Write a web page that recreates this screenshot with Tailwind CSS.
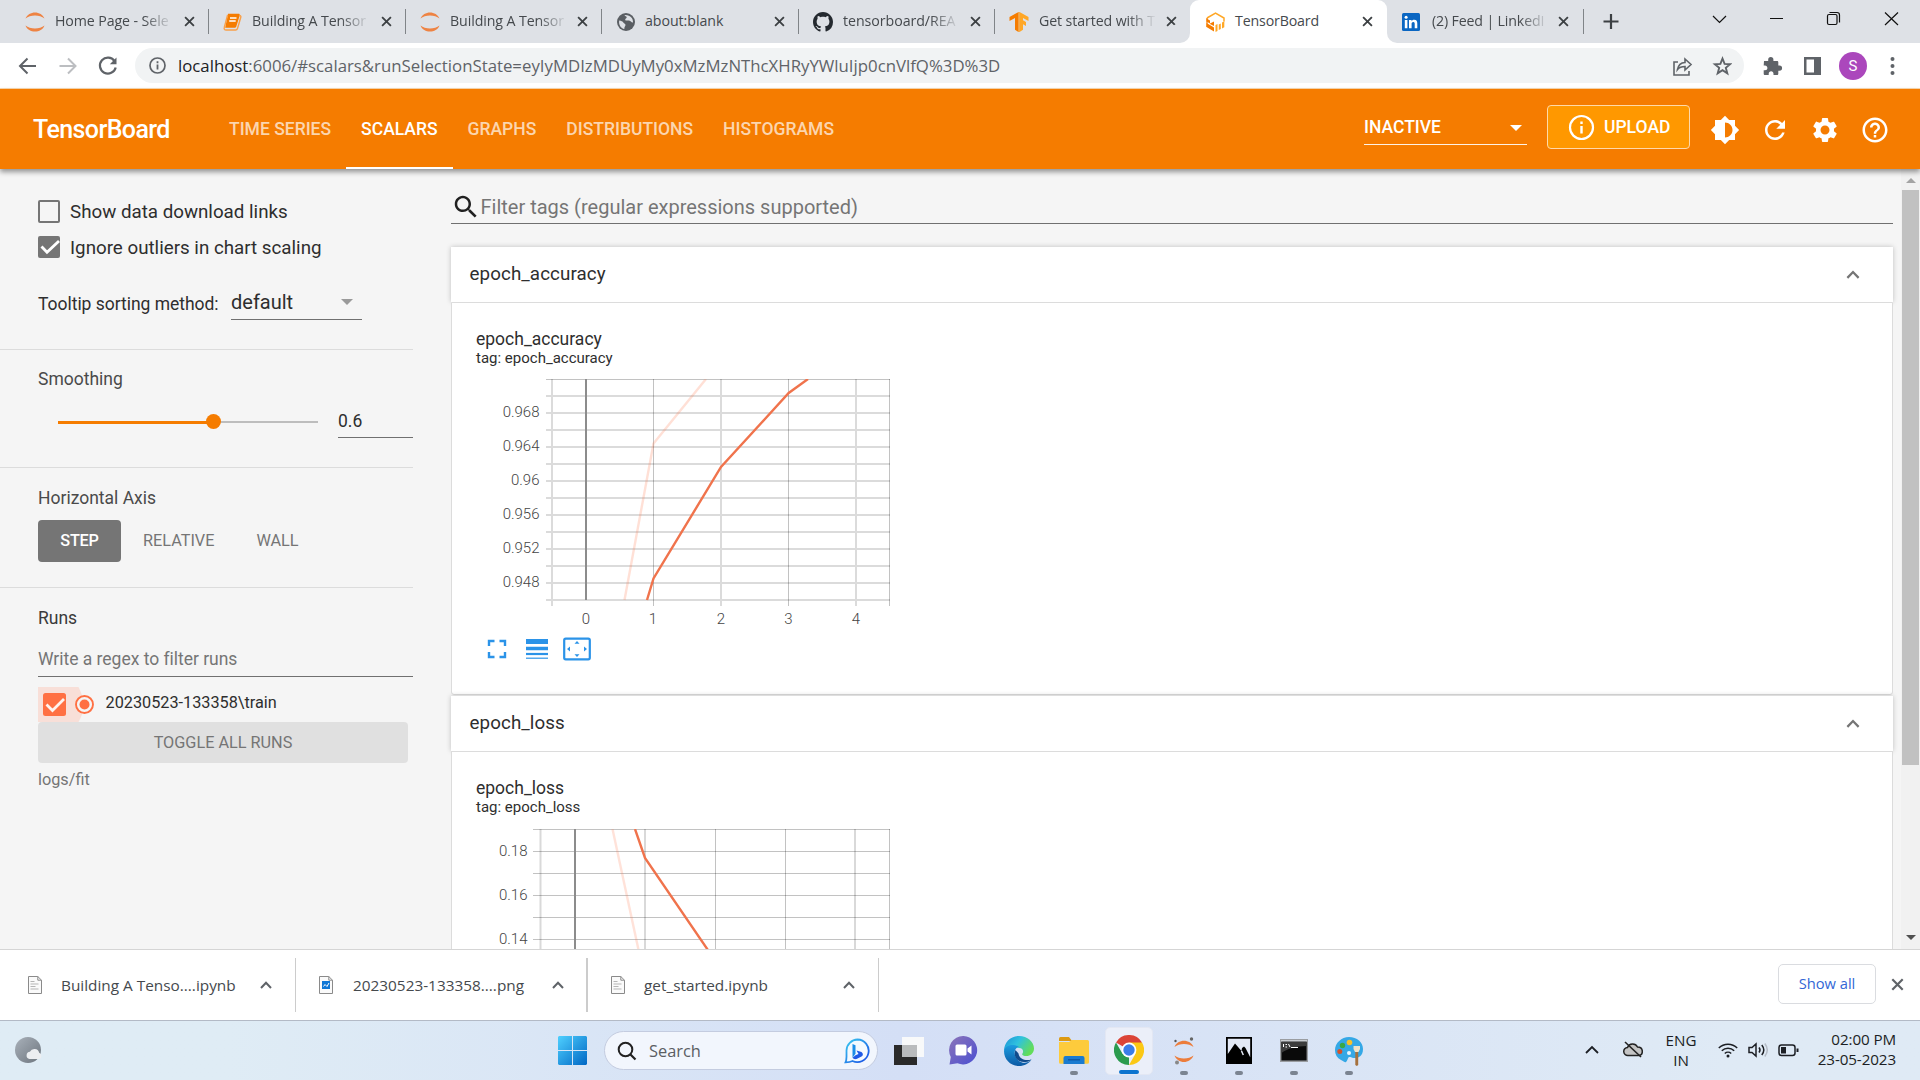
<!DOCTYPE html>
<html lang="en">
<head>
<meta charset="utf-8">
<title>TensorBoard</title>
<script src="https://cdn.jsdelivr.net/npm/@tailwindcss/browser@4"></script>
</head>
<body class="w-[1920px] h-[1080px] overflow-hidden flex flex-col bg-white font-['Roboto',sans-serif] text-[17.5px] text-[#2e2e2e]">

<svg class="hidden">
  <defs>
    <symbol id="x" viewBox="0 0 12 12"><path d="M1.2 1.2 10.8 10.8M10.8 1.2 1.2 10.8" fill="none" stroke="currentColor" stroke-width="2"/></symbol>
    <symbol id="jup" viewBox="0 0 20 20"><path d="M.5 6.5C2 2.500 6 .4 10 .4s8 2.100 9.500 6.100C17 4.500 13.800 3.500 10 3.500S3 4.500.5 6.500zM.5 13.500C2 17.500 6 19.600 10 19.600s8-2.100 9.500-6.100c-2.500 2-5.700 3-9.500 3s-7-1-9.500-3z" fill="#ee8343"/></symbol>
    <symbol id="up" viewBox="0 0 12 8"><path d="M1 7 6 1.800 11 7" fill="none" stroke="currentColor" stroke-width="2"/></symbol>
    <symbol id="doc" viewBox="0 0 14 18"><path d="M.5.5h9.300l3.700 3.700v13.300H.5z" fill="#fafafa" stroke="#8a8a8a"/><path d="M9.800.5v3.700h3.700" fill="none" stroke="#8a8a8a"/></symbol>
  </defs>
</svg>

<!-- Tab strip -->
<div class="h-[43px] shrink-0 bg-[#dee1e6] flex items-stretch pl-[12px] font-['Open_Sans',sans-serif] text-[14.2px] text-[#45494d]">
  <div class="w-[197px] flex items-center pl-[13px] pr-[14px] relative">
    <svg class="w-[20px] h-[20px] shrink-0"><use href="#jup"/></svg>
    <span class="ml-[10px] w-[118px] pb-px whitespace-nowrap mask-r-from-75% tracking-[-0.1px]">Home Page - Sele</span>
    <svg class="w-[11px] h-[11px] ml-auto text-[#3c4043]"><use href="#x"/></svg>
    <i class="absolute right-0 top-[9px] w-px h-[25px] bg-[#808488]"></i>
  </div>
  <div class="w-[197px] flex items-center pl-[14px] pr-[14px] relative">
    <svg class="w-[19px] h-[18px] shrink-0" viewBox="0 0 19 18"><path d="M5 .8h10.500c1 0 1.500.6 1.200 1.600l-3.400 11c-.3.8-1 1.300-1.800 1.300H2.200z" fill="#f57c00"/><path d="M16.500 2.500c1.200.1 1.600.9 1.300 1.800l-3.300 11.200c-.3 1-1 1.500-1.900 1.500H3.200C1.500 17 .8 16 1.300 14.500L4.600 2" fill="none" stroke="#f9a04a" stroke-width="1.400"/><path d="M7 5h6.500M6.200 8h6.500" stroke="#fff" stroke-width="1.400"/></svg>
    <span class="ml-[10px] w-[118px] pb-px whitespace-nowrap mask-r-from-75% tracking-[-0.1px]">Building A Tensor</span>
    <svg class="w-[11px] h-[11px] ml-auto text-[#3c4043]"><use href="#x"/></svg>
    <i class="absolute right-0 top-[9px] w-px h-[25px] bg-[#808488]"></i>
  </div>
  <div class="w-[196px] flex items-center pl-[14px] pr-[14px] relative">
    <svg class="w-[20px] h-[20px] shrink-0"><use href="#jup"/></svg>
    <span class="ml-[10px] w-[118px] pb-px whitespace-nowrap mask-r-from-75% tracking-[-0.1px]">Building A Tensor</span>
    <svg class="w-[11px] h-[11px] ml-auto text-[#3c4043]"><use href="#x"/></svg>
    <i class="absolute right-0 top-[9px] w-px h-[25px] bg-[#808488]"></i>
  </div>
  <div class="w-[197px] flex items-center pl-[15px] pr-[14px] relative">
    <svg class="w-[18px] h-[18px] shrink-0" viewBox="0 0 18 18"><circle cx="9" cy="9" r="9" fill="#5a5e63"/><path d="M2.200 7.500c2 .2 3.500.8 4.300 2.200.6 1 2 .8 2 2.300 0 1.300-1.200 1.600-1.200 4C4 15.500 1.500 12 2.200 7.500zM7.500 2c.4 1.300 2 1 2.200 2.200.2 1.100-1.800 1.100-1.500 2.500.3 1.300 2.200.6 3.800.8 1.800.2 2.300 2.300 4 2 .3-3.800-2.300-7.800-8.500-7.500z" fill="#dee1e6"/></svg>
    <span class="ml-[10px] w-[118px] pb-px whitespace-nowrap tracking-[-0.05px]">about:blank</span>
    <svg class="w-[11px] h-[11px] ml-auto text-[#3c4043]"><use href="#x"/></svg>
    <i class="absolute right-0 top-[9px] w-px h-[25px] bg-[#808488]"></i>
  </div>
  <div class="w-[196px] flex items-center pl-[14px] pr-[14px] relative">
    <svg class="w-[20px] h-[20px] shrink-0" viewBox="0 0 16 16"><path fill="#24292f" d="M8 0C3.580 0 0 3.580 0 8c0 3.540 2.290 6.530 5.470 7.590.4.070.55-.17.55-.38 0-.19-.01-.82-.01-1.490-2.010.37-2.530-.49-2.690-.94-.09-.23-.48-.94-.82-1.130-.28-.15-.68-.52-.01-.53.63-.01 1.080.58 1.230.82.72 1.210 1.870.87 2.330.66.07-.52.28-.87.51-1.070-1.780-.2-3.640-.89-3.640-3.950 0-.87.31-1.590.82-2.150-.08-.2-.36-1.020.08-2.120 0 0 .67-.21 2.200.82.64-.18 1.320-.27 2-.27s1.360.09 2 .27c1.530-1.040 2.200-.82 2.200-.82.44 1.100.16 1.920.08 2.120.51.56.82 1.270.82 2.150 0 3.070-1.870 3.750-3.650 3.950.29.25.54.73.54 1.480 0 1.070-.01 1.930-.01 2.200 0 .21.15.46.55.38A8.010 8.010 0 0 0 16 8c0-4.420-3.580-8-8-8z"/></svg>
    <span class="ml-[10px] w-[117px] pb-px whitespace-nowrap mask-r-from-75% tracking-[-0.05px]">tensorboard/REA</span>
    <svg class="w-[11px] h-[11px] ml-auto text-[#3c4043]"><use href="#x"/></svg>
    <i class="absolute right-0 top-[9px] w-px h-[25px] bg-[#808488]"></i>
  </div>
  <div class="w-[195px] flex items-center pl-[14px] pr-[13px]">
    <svg class="w-[20px] h-[20px] shrink-0" viewBox="0 0 20 20"><path d="M9.500 0v20L6 17.800V6L.5 9V5z" fill="#f57c00"/><path d="M10.500 0v20l3.500-2.200v-5.500l3 1.700V10l-3-1.800V6l5.500 3V5z" fill="#ffa726"/><path d="M9.500 0h1v20h-1z" fill="#fb9210"/></svg>
    <span class="ml-[10px] w-[118px] pb-px whitespace-nowrap mask-r-from-75% tracking-[-0.1px]">Get started with T</span>
    <svg class="w-[11px] h-[11px] ml-auto text-[#3c4043]"><use href="#x"/></svg>
  </div>
  <div class="bg-white w-[197px]"><div class="w-[197px] h-full flex items-center pl-[16px] pr-[14px] relative">
    <i class="absolute top-0 left-0 w-[9px] h-[9px] bg-[#dee1e6]"></i><i class="absolute top-0 left-0 w-[18px] h-[18px] rounded-full bg-white"></i>
    <i class="absolute top-0 right-0 w-[9px] h-[9px] bg-[#dee1e6]"></i><i class="absolute top-0 right-0 w-[18px] h-[18px] rounded-full bg-white"></i>
    <i class="absolute bottom-0 left-[-10px] w-[10px] h-[10px] bg-white"></i><i class="absolute bottom-0 left-[-20px] w-[20px] h-[20px] rounded-full bg-[#dee1e6]"></i>
    <i class="absolute bottom-0 right-[-10px] w-[10px] h-[10px] bg-white"></i><i class="absolute bottom-0 right-[-20px] w-[20px] h-[20px] rounded-full bg-[#dee1e6]"></i>
    <svg class="w-[19px] h-[20px] shrink-0 relative" viewBox="0 0 19 20"><path d="M1 6 9.500 1 18 6v3.500" fill="none" stroke="#ffa726" stroke-width="1.500"/><path d="M.5 6.500 4 8.500v3l4-2v4.500l-4-2v-.5L.5 9.500zM.5 11l7.500 4.500V19.500L.5 15z" fill="#f57c00"/><path d="M9.500 13l2-1v7l-2 1zM12.800 12.500l2-1V17l-2 1zM16 10.500l2.300-1.300v6l-2.300 1.300z" fill="#ffa726"/><path d="M1 6v9" stroke="#f57c00" stroke-width="1.200"/></svg>
    <span class="ml-[10px] w-[118px] pb-px whitespace-nowrap tracking-[-0.15px]">TensorBoard</span>
    <svg class="w-[11px] h-[11px] ml-auto text-[#3c4043]"><use href="#x"/></svg>
  </div></div>
  <div class="w-[197px] flex items-center pl-[15px] pr-[15px] relative">
    <svg class="w-[18px] h-[18px] shrink-0 relative" viewBox="0 0 18 18"><rect width="18" height="18" rx="1.500" fill="#0a66c2"/><path d="M2.800 7h2.600v8.300H2.800zM7 7h2.500v1.200C10 7.400 11 6.800 12.200 6.800c2.500 0 3.100 1.600 3.100 3.900v4.600h-2.600v-4.200c0-1.100-.1-2.100-1.400-2.100-1.400 0-1.700 1-1.700 2.100v4.200H7z" fill="#fff"/><circle cx="4.100" cy="4.200" r="1.500" fill="#fff"/></svg>
    <span class="ml-[12px] w-[117px] pb-px whitespace-nowrap mask-r-from-75% tracking-[-0.15px]">(2) Feed | LinkedI</span>
    <svg class="w-[11px] h-[11px] ml-auto text-[#3c4043]"><use href="#x"/></svg>
    <i class="absolute right-0 top-[9px] w-px h-[25px] bg-[#808488]"></i>
  </div>
  <div class="flex-1 flex items-center relative text-black">
    <svg class="w-[336px] h-[43px]" viewBox="0 0 336 43" fill="none" stroke="#111" stroke-width="1.200"><path d="M27 14v15M19.500 21.500h15" stroke="#3c4043" stroke-width="2.200"/><path d="M129 16l6.500 6.500L142 16M186 18.500h13M301 12.500l13 12.500M314 12.500l-13 12.500"/><rect x="243.500" y="14.500" width="9.500" height="10" rx="1.500"/><path d="M245.500 12.500h7.500q2.500 0 2.500 2.500v7.500"/></svg>
  </div>
</div>

<!-- Address bar -->
<div class="h-[46px] shrink-0 bg-white flex items-center border-b border-[#fbd9b0] relative">
  <svg class="w-[135px] h-[44px] shrink-0" viewBox="0 0 135 44" fill="none" stroke="#5f6368" stroke-width="2"><path d="M36 22H20.500M27.500 14.500 20 22l7.500 7.500"/><path d="M59.500 22H75M68 14.500l7.500 7.500L68 29.500" stroke="#bcbec1"/><path d="M114.500 17a8 8 0 1 0 1.200 6.500" stroke-width="2.200"/><path d="M116.500 13.500v6.700h-6.700z" fill="#5f6368" stroke="none"/></svg>
  <div class="w-[1609px] h-[35px] rounded-full bg-[#f1f3f4] flex items-center pl-[14px] pr-[12px]">
    <svg class="w-[17px] h-[17px] shrink-0" viewBox="0 0 17 17"><circle cx="8.500" cy="8.500" r="7.500" fill="none" stroke="#5f6368" stroke-width="1.700"/><path d="M8.500 7.500v5M8.500 4.300v1.900" stroke="#5f6368" stroke-width="1.800"/></svg>
    <span class="ml-[12px] font-['Open_Sans',sans-serif] text-[16.8px] whitespace-nowrap text-[#5f6368]"><span class="text-[#202124]">localhost</span>:6006/#scalars&amp;runSelectionState=eyIyMDIzMDUyMy0xMzMzNThcXHRyYWluIjp0cnVlfQ%3D%3D</span>
    <svg class="w-[60px] h-[24px] ml-auto shrink-0" viewBox="0 0 60 24" fill="none" stroke="#5f6368" stroke-width="1.600"><path d="M6 8H2v13h15v-4M5.500 15.500c.8-4.500 3.500-6.800 7.500-7V5l6 5.500-6 5.500v-3.500c-3.500 0-5.700.8-7.500 3z"/><path d="M50.500 4.500l2.100 5.400 5.500.3-4.300 3.600 1.500 5.500-4.800-3.100-4.800 3.100 1.500-5.500-4.300-3.600 5.500-.3z" stroke-width="1.900"/></svg>
  </div>
  <svg class="w-[176px] h-[44px] shrink-0" viewBox="0 0 176 44" fill="#5f6368"><path d="M20 17h4.200v-1.500a2.600 2.600 0 0 1 5.200 0V17h3.600c.8 0 1.300.5 1.300 1.300v3.200h1.200a2.600 2.600 0 0 1 0 5.200h-1.200v3c0 .8-.5 1.300-1.300 1.300h-3.500v-1.300c0-1.500-1-2.500-2.400-2.500s-2.400 1-2.400 2.500V31H21c-.8 0-1.300-.5-1.300-1.300v-3.500H21c1.500 0 2.400-1 2.400-2.300s-1-2.400-2.400-2.400h-1.300z"/><path fill-rule="evenodd" d="M60 13h17v18H60zm2.500 2.500v13h7.500v-13z"/><circle cx="109" cy="22" r="14" fill="#ab47bc"/><circle cx="148.500" cy="15" r="2"/><circle cx="148.500" cy="22" r="2"/><circle cx="148.500" cy="29" r="2"/><text x="109" y="27" font-family="Roboto" font-size="15" fill="#fff" text-anchor="middle">S</text></svg>
</div>

<!-- TensorBoard header -->
<div class="h-[80px] shrink-0 bg-[#f57c00] flex items-center relative z-10 shadow-[0_3px_5px_rgba(0,0,0,0.4)] text-white font-medium">
  <div class="w-[182px] pl-[33px] pt-[2px] text-[25px] tracking-[-0.6px]">TensorBoard</div>
  <nav class="flex h-full ml-[32px] text-white/70 [&>span]:px-[15px] [&>span]:flex [&>span]:items-center whitespace-nowrap">
    <span class="pt-px">TIME SERIES</span>
    <span class="text-white border-b-2 border-white pt-[3px]">SCALARS</span>
    <span class="pt-px">GRAPHS</span>
    <span class="pt-px">DISTRIBUTIONS</span>
    <span class="pt-px">HISTOGRAMS</span>
  </nav>
  <div class="ml-auto flex items-center h-full">
    <div class="w-[163px] h-[32px] border-b border-white/90 flex items-center mr-[20px]"><span class="relative top-[-1px]">INACTIVE</span><svg class="w-[12px] h-[6px] ml-auto mr-[5px] relative top-[-1px]" viewBox="0 0 12 6"><path d="M0 0h12L6 6z" fill="#fff"/></svg></div>
    <div class="w-[143px] h-[44px] relative top-[-2px] rounded-[4px] border border-[#ffd9a8] bg-[#ff9800] flex items-center pl-[20px]">
      <svg class="w-[27px] h-[27px]" viewBox="0 0 27 27"><circle cx="13.500" cy="13.500" r="11.500" fill="none" stroke="#fff" stroke-width="2.200"/><path d="M13.500 12v7.500M13.500 7.500v2.600" stroke="#fff" stroke-width="2.400"/></svg>
      <span class="ml-[9px] pt-px">UPLOAD</span>
    </div>
    <div class="flex items-center ml-[20px] mr-[30px] gap-[20px] fill-white pt-px">
      <svg class="w-[30px] h-[30px]" viewBox="0 0 24 24"><path d="M20 15.310 23.310 12 20 8.690V4h-4.690L12 .69 8.690 4H4v4.690L.69 12 4 15.310V20h4.690L12 23.310 15.310 20H20v-4.690zM12 18V6c3.310 0 6 2.690 6 6s-2.690 6-6 6z"/></svg>
      <svg class="w-[30px] h-[30px]" viewBox="0 0 24 24"><path d="M17.650 6.350C16.200 4.900 14.210 4 12 4c-4.420 0-7.990 3.580-7.990 8s3.570 8 7.990 8c3.730 0 6.840-2.550 7.730-6h-2.080c-.82 2.330-3.040 4-5.650 4-3.310 0-6-2.690-6-6s2.690-6 6-6c1.660 0 3.140.69 4.220 1.780L13 11h7V4l-2.350 2.350z"/></svg>
      <svg class="w-[30px] h-[30px]" viewBox="0 0 24 24"><path d="M19.140 12.940c.04-.3.060-.61.060-.94 0-.32-.02-.64-.07-.94l2.030-1.580c.18-.14.23-.41.12-.61l-1.920-3.320c-.12-.22-.37-.29-.59-.22l-2.390.96c-.5-.38-1.030-.7-1.620-.94l-.36-2.540c-.04-.24-.24-.41-.48-.41h-3.840c-.24 0-.43.17-.47.41l-.36 2.540c-.59.24-1.130.57-1.620.94l-2.390-.96c-.22-.08-.47 0-.59.22L2.740 8.870c-.12.21-.08.47.12.61l2.030 1.580c-.05.3-.09.63-.09.94s.02.64.07.94l-2.030 1.580c-.18.14-.23.41-.12.61l1.920 3.320c.12.22.37.29.59.22l2.390-.96c.5.38 1.030.7 1.620.94l.36 2.540c.05.24.24.41.48.41h3.840c.24 0 .44-.17.47-.41l.36-2.540c.59-.24 1.130-.56 1.620-.94l2.390.96c.22.08.47 0 .59-.22l1.920-3.320c.12-.22.07-.47-.12-.61l-2.010-1.580zM12 15.600c-1.980 0-3.600-1.620-3.600-3.600s1.620-3.600 3.600-3.600 3.600 1.620 3.600 3.600-1.620 3.600-3.600 3.600z"/></svg>
      <svg class="w-[30px] h-[30px]" viewBox="0 0 24 24"><path d="M11 18h2v-2h-2v2zm1-16C6.480 2 2 6.480 2 12s4.480 10 10 10 10-4.480 10-10S17.520 2 12 2zm0 18c-4.410 0-8-3.590-8-8s3.590-8 8-8 8 3.590 8 8-3.590 8-8 8zm0-14c-2.210 0-4 1.790-4 4h2c0-1.100.9-2 2-2s2 .9 2 2c0 2-3 1.750-3 5h2c0-2.250 3-2.500 3-5 0-2.210-1.790-4-4-4z"/></svg>
    </div>
  </div>
</div>

<!-- Page body -->
<div class="h-[780px] shrink-0 flex bg-[#f5f5f5] overflow-hidden">
  <aside class="w-[413px] shrink-0 whitespace-nowrap">
    <section class="h-[181px] border-b border-[#dcdcdc] pl-[38px] pt-[31px]">
      <div class="flex items-center h-[23px] text-[18.75px]"><i class="w-[22px] h-[23px] border-2 border-[#757575] rounded-[2px]"></i><span class="ml-[10px] pt-[2px]">Show data download links</span></div>
      <div class="flex items-center h-[22px] mt-[13px] text-[18.75px]"><svg class="w-[22px] h-[22px]" viewBox="0 0 22 22"><rect width="22" height="22" rx="2" fill="#757575"/><path d="M3.500 10.500l5.500 5.700L21 5" fill="none" stroke="#fff" stroke-width="2.800"/></svg><span class="ml-[10px] pt-[2px]">Ignore outliers in chart scaling</span></div>
      <div class="flex items-center h-[40px] mt-[22px]"><span class="w-[193px] pt-[8px] tracking-[-0.03px]">Tooltip sorting method:</span><div class="w-[131px] h-full border-b border-[#707070] flex items-center text-[20px]"><span class="pt-[4px]">default</span><svg class="w-[12px] h-[6px] ml-auto mr-[9px] mt-[5px]" viewBox="0 0 12 6"><path d="M0 0h12L6 6z" fill="#9a9a9a"/></svg></div></div>
    </section>
    <section class="h-[118px] border-b border-[#dcdcdc] pl-[38px] pt-[16px]">
      <h3 class="leading-[26px] text-[#4a4a4a]">Smoothing</h3>
      <div class="flex mt-[12px]">
        <svg class="w-[300px] h-[34px]" viewBox="0 0 300 34"><path d="M20 18h260" stroke="#bdbdbd" stroke-width="2"/><path d="M20 18.500h156" stroke="#f57c00" stroke-width="3"/><circle cx="175.500" cy="17.500" r="7.500" fill="#f57c00"/></svg>
        <div class="w-[75px] h-[34px] border-b border-[#707070] leading-[34px]">0.6</div>
      </div>
    </section>
    <section class="h-[120px] border-b border-[#dcdcdc] pl-[38px] pt-[17px]">
      <h3 class="leading-[26px] text-[#4a4a4a]">Horizontal Axis</h3>
      <div class="flex mt-[9px] h-[42px] items-center text-[16.25px] text-[#757575]"><span class="w-[83px] h-full rounded-[4px] bg-[#757575] text-white font-medium flex items-center justify-center tracking-[-0.2px]">STEP</span><span class="ml-[22px]">RELATIVE</span><span class="ml-[42px]">WALL</span></div>
    </section>
    <section class="pl-[38px] pt-[17px]">
      <h3 class="leading-[26px] text-[#3a3a3a]">Runs</h3>
      <div class="h-[46px] border-b border-[#707070] leading-[31px] pt-[13px] text-[#757575] tracking-[-0.02px]">Write a regex to filter runs</div>
      <div class="flex mt-[10px] h-[35px] text-[16.25px]">
        <svg class="w-[67px] h-[35px]" viewBox="0 0 67 35"><path d="M0 0h40.500c2.500 5 5 11 5 17.500S43.500 30 40.500 35H0z" fill="#f8dfd8"/><rect x="5" y="6" width="23" height="23" rx="2.500" fill="#ff7043"/><path d="M8.500 17.500l6 6L26 12" fill="none" stroke="#fff3ee" stroke-width="2.800"/><circle cx="46.500" cy="17.500" r="8.500" fill="#f5f5f5" stroke="#ff7043" stroke-width="1.900"/><circle cx="46.500" cy="17.500" r="5" fill="#ff7043"/></svg>
        <span class="leading-[32px] ml-[0.5px]">20230523-133358\train</span>
      </div>
      <div class="w-[370px] h-[41px] rounded-[4px] bg-[#e0e0e0] flex items-center justify-center text-[16.25px] text-[#757575] pt-px">TOGGLE ALL RUNS</div>
      <div class="mt-[4px] leading-[26px] text-[16.25px] text-[#757575]">logs/fit</div>
    </section>
  </aside>

  <main class="w-[1442px] ml-[38px] shrink-0 whitespace-nowrap">
    <div class="h-[55px] border-b border-[#707070] flex items-end pb-px text-[20px] text-[#757575]"><svg class="w-[30px] h-[30px] fill-[#212121]" viewBox="0 0 24 24"><path d="M15.500 14h-.79l-.28-.27C15.410 12.590 16 11.110 16 9.500 16 5.910 13.090 3 9.500 3S3 5.910 3 9.500 5.910 16 9.500 16c1.610 0 3.090-.59 4.230-1.570l.27.28v.79l5 4.990L20.490 19l-4.990-5zm-6 0C7.010 14 5 11.990 5 9.500S7.010 5 9.500 5 14 7.010 14 9.500 11.990 14 9.500 14z"/></svg><span class="leading-[30px] ml-[-0.5px]">Filter tags (regular expressions supported)</span></div>

    <section class="mt-[23px]">
      <header class="h-[55px] bg-white shadow-[0_0_5px_rgba(0,0,0,0.22)] flex items-center pl-[18.5px] pr-[33px] text-[18.75px] tracking-[0.1px]">epoch_accuracy<svg class="w-[14px] h-[9px] ml-auto text-[#757575]"><use href="#up"/></svg></header>
      <div class="h-[393px] bg-white border border-[#dcdcdc] rounded-b-[3px] relative pl-[24px] pt-[23px]">
        <h4 class="leading-[26px]">epoch_accuracy</h4>
        <p class="text-[15px] leading-[18px] mt-[-3px]">tag: epoch_accuracy</p>
        <svg class="w-[440px] h-[260px] mt-[12px]" viewBox="476 379 440 260" fill="none">
          <g stroke="#000" stroke-opacity=".14" stroke-width="2"><path d="M546 396h344M546 413h344M546 430h344M546 447h344M546 464h344M546 481h344M546 498h344M546 515h344M546 532h344M546 549h344M546 566h344M546 583h344M546 600h344M552 379v227M721 379v227M856 379v227"/></g>
          <path d="M546 379.500h344M653.500 379v227M788.500 379v227M889.500 379v227" stroke="#000" stroke-opacity=".24"/>
          <path d="M586 379v221" stroke="#8c8c8c" stroke-width="2"/>
          <path d="M624.500 600 653.500 443.500 706 379" stroke="#ff7043" stroke-opacity=".22" stroke-width="2.400"/>
          <path d="M647 600 653.500 578.500 721 467 788.700 393 808 379" stroke="#f0734c" stroke-width="2.400"/>
          <g font-family="Roboto" font-weight="300" font-size="15" fill="#444" text-anchor="end"><text x="539.500" y="416.500">0.968</text><text x="539.500" y="450.500">0.964</text><text x="539.500" y="484.500">0.96</text><text x="539.500" y="518.500">0.956</text><text x="539.500" y="552.500">0.952</text><text x="539.500" y="586.500">0.948</text></g>
          <g font-family="Roboto" font-weight="300" font-size="15" fill="#444" text-anchor="middle"><text x="586" y="623.500">0</text><text x="653" y="623.500">1</text><text x="721" y="623.500">2</text><text x="788.500" y="623.500">3</text><text x="856" y="623.500">4</text></g>
        </svg>
        <svg class="w-[130px] h-[24px] mt-[-2px]" viewBox="476 637 130 24" fill="none" stroke="#2b93e8"><path d="M489 646v-5h5.500M499.500 641h5.500v5M505 652v5h-5.500M494.500 657H489v-5" stroke-width="2.400"/><path d="M526 641.500h22" stroke-width="5"/><path d="M526 648.500h22" stroke-width="3.500"/><path d="M526 654h22" stroke-width="2.200"/><path d="M526 658.200h22" stroke-width="1.200"/><rect x="564.200" y="638.700" width="25.600" height="20.600" rx="1.500" stroke-width="2.200"/><path d="M574.500 643.800 577 641l2.500 2.800zM574.500 654.200 577 657l2.500-2.800zM570 646.500 567 649l3 2.500zM584 646.500l3 2.500-3 2.500z" fill="#2b93e8" stroke="none"/></svg>
      </div>
    </section>

    <section class="mt-[1px]">
      <header class="h-[55px] relative bg-white shadow-[0_0_5px_rgba(0,0,0,0.22)] flex items-center pl-[18.5px] pr-[33px] text-[18.75px] tracking-[0.1px]">epoch_loss<svg class="w-[14px] h-[9px] ml-auto text-[#757575]"><use href="#up"/></svg></header>
      <div class="h-[393px] relative bg-white border border-[#dcdcdc] pl-[24px] pt-[23px]">
        <h4 class="leading-[26px]">epoch_loss</h4>
        <p class="text-[15px] leading-[18px] mt-[-3px]">tag: epoch_loss</p>
        <svg class="w-[440px] h-[260px] mt-[13px]" viewBox="476 829 440 260" fill="none">
          <path d="M533 829.500h357M533 851.500h357M533 873.500h357M533 895.500h357M533 917.500h357M533 939.500h357M715.500 829v221M785.500 829v221M889.500 829v221" stroke="#000" stroke-opacity=".24"/>
          <path d="M540.500 829v221M645 829v221M855 829v221" stroke="#000" stroke-opacity=".15" stroke-width="2"/>
          <path d="M575 829v221" stroke="#8c8c8c" stroke-width="2"/>
          <path d="M612.500 829 645 980" stroke="#ff7043" stroke-opacity=".2" stroke-width="2.400"/>
          <path d="M635 829 645 858 725 975" stroke="#f0734c" stroke-width="2.400"/>
          <g font-family="Roboto" font-weight="300" font-size="15" fill="#444" text-anchor="end"><text x="527.500" y="856">0.18</text><text x="527.500" y="900">0.16</text><text x="527.500" y="944">0.14</text></g>
        </svg>
      </div>
    </section>
  </main>
  <div class="w-[19px] ml-auto bg-[#f1f1f1] flex flex-col items-center pt-[9px] pb-[9px]">
    <svg class="w-[10px] h-[5px]" viewBox="0 0 10 5"><path d="M0 5h10L5 0z" fill="#a3a3a3"/></svg>
    <i class="w-[17px] h-[575px] bg-[#c1c1c1] mt-[7px]"></i>
    <svg class="w-[10px] h-[5px] mt-auto" viewBox="0 0 10 5"><path d="M0 0h10L5 5z" fill="#505050"/></svg>
  </div>
</div>

<!-- Downloads shelf -->
<div class="h-[71px] shrink-0 bg-white border-t border-[#d5d5d5] flex items-center font-['Open_Sans',sans-serif] text-[15.35px] text-[#45494d] whitespace-nowrap">
  <div class="w-[296px] h-[54px] border-r border-[#ccc] flex items-center pl-[28px] pr-[23px]">
    <svg class="w-[14px] h-[18px]" viewBox="0 0 14 18"><use href="#doc"/><path d="M2.500 5.500h4M2.500 8h8M2.500 10.500h5M2.500 13h8" stroke="#b5b5b5"/></svg>
    <span class="ml-[19px] pt-px">Building A Tenso....ipynb</span>
    <svg class="w-[12px] h-[8px] ml-auto text-[#5f6368]"><use href="#up"/></svg>
  </div>
  <div class="w-[292px] h-[54px] border-r-2 border-[#ccc] flex items-center pl-[23px] pr-[22px]">
    <svg class="w-[14px] h-[18px]" viewBox="0 0 14 18"><use href="#doc"/><path d="M3 5h8v8H3z" fill="#0f77d6"/><path d="M4.500 10.500 6 8.500l2 2L10 7" stroke="#fff" fill="none"/></svg>
    <span class="ml-[20px] pt-px">20230523-133358....png</span>
    <svg class="w-[12px] h-[8px] ml-auto text-[#5f6368]"><use href="#up"/></svg>
  </div>
  <div class="w-[291px] h-[54px] border-r border-[#ccc] flex items-center pl-[23px] pr-[23px]">
    <svg class="w-[14px] h-[18px]" viewBox="0 0 14 18"><use href="#doc"/><path d="M2.500 5.500h4M2.500 8h8M2.500 10.500h5M2.500 13h8" stroke="#b5b5b5"/></svg>
    <span class="ml-[19px] pt-px">get_started.ipynb</span>
    <svg class="w-[12px] h-[8px] ml-auto text-[#5f6368]"><use href="#up"/></svg>
  </div>
  <div class="ml-auto w-[98px] h-[40px] border border-[#dadce0] rounded-[5px] flex items-center justify-center text-[14.7px] font-medium text-[#3367d6] mr-[15px] mt-[-2px] pb-px">Show all</div>
  <svg class="w-[13px] h-[13px] text-[#5f6368] mr-[16px] mb-[2px]"><use href="#x"/></svg>
</div>

<!-- Taskbar -->
<div class="h-[60px] shrink-0 border-t border-[#b3bac6] bg-linear-to-r from-[#dfecf5] from-[12%] via-[#d4dff6] via-[47%] to-[#dfeaf5] to-[90%] flex items-center font-['Open_Sans',sans-serif] relative">
  <svg class="w-[30px] h-[30px] ml-[14px]" viewBox="0 0 30 30"><defs><linearGradient id="mo" x1="0" y1="0" x2="1" y2="1"><stop offset="0" stop-color="#a9b1ba"/><stop offset="1" stop-color="#6d757e"/></linearGradient></defs><circle cx="14" cy="14" r="13" fill="url(#mo)"/><path d="M15.500 23a3.700 3.700 0 0 1 .4-7.300 5 5 0 0 1 9.300 1A3.300 3.300 0 0 1 25 23z" fill="#eceef1"/></svg>
  <svg class="w-[29px] h-[29px] ml-[514px]" viewBox="0 0 29 29"><defs><linearGradient id="win" x1="0" y1="0" x2="1" y2="1"><stop offset="0" stop-color="#4fd0ff"/><stop offset="1" stop-color="#0067c4"/></linearGradient></defs><path d="M1 0h13v14H0V1zM15 0h13l1 1v13H15zM0 15h14v14H1l-1-1zM15 15h14v13l-1 1H15z" fill="url(#win)"/></svg>
  <div class="w-[274px] h-[39px] ml-[17px] rounded-full bg-[#f2f6fd] border border-[#c4cce0] flex items-center pl-[12px] pr-[7px]">
    <svg class="w-[20px] h-[20px]" viewBox="0 0 20 20"><circle cx="8.500" cy="8.500" r="6.800" fill="none" stroke="#222" stroke-width="2"/><path d="M13.500 13.500l5 5" stroke="#222" stroke-width="2.200"/></svg>
    <span class="ml-[12px] pt-px text-[16.4px] text-[#5b5e63]">Search</span>
    <svg class="w-[26px] h-[26px] ml-auto" viewBox="0 0 26 26"><defs><linearGradient id="bi" x1="0" y1="0" x2="1" y2="1"><stop offset="0" stop-color="#3ccdf0"/><stop offset="1" stop-color="#174ae4"/></linearGradient></defs><path d="M13.500 1.500a11.300 11.300 0 1 1-5 21.500c-2 1-4.500 1.300-7 1.300.9-1.800 1-3.600 1-5.500V12.500A11.200 11.200 0 0 1 13.500 1.500z" fill="#f4faff" stroke="url(#bi)" stroke-width="1.800"/><path d="M8.500 6l3 1.200v8.500l-3 4z" fill="#1b8ee8"/><path d="M8.500 19.800l3-2.500 3-1.300-2-3.500 5 1.500c2 1.500 1.700 3.500 0 4.600l-5 2.400c-1.500.4-3.200 0-4-1.200z" fill="#1f5ae6"/></svg>
  </div>
  <svg class="w-[30px] h-[28px] ml-[16px]" viewBox="0 0 30 28"><path d="M0 8h23v20H0z" fill="#2a2a2a"/><path d="M8 0h22v20H8z" fill="#fafafa" fill-opacity=".95"/><path d="M8 8h15v12H8z" fill="#b9bbbd"/></svg>
  <svg class="w-[29px] h-[29px] ml-[25px]" viewBox="0 0 29 29"><defs><linearGradient id="ch" x1="0" y1="0" x2="1" y2="1"><stop offset="0" stop-color="#8c74b8"/><stop offset="1" stop-color="#4a4fd2"/></linearGradient></defs><path d="M14.500 0a14.200 14.200 0 1 1-6 27.300L.5 28.500 1.800 21A14.200 14.200 0 0 1 14.500 0z" fill="url(#ch)"/><rect x="6.500" y="8.500" width="11" height="11" rx="1.500" fill="#fff"/><path d="M18.500 12.500 22.500 9.500v9l-4-3z" fill="#fff"/></svg>
  <svg class="w-[30px] h-[30px] ml-[26px]" viewBox="0 0 30 30"><defs><linearGradient id="e1" x1="0" y1="0" x2="1" y2=".5"><stop offset="0" stop-color="#1b8fd6"/><stop offset=".5" stop-color="#2fc2df"/><stop offset="1" stop-color="#63dd5a"/></linearGradient><linearGradient id="e2" x1="0" y1="0" x2="0" y2="1"><stop offset="0" stop-color="#1c9de0"/><stop offset="1" stop-color="#0c59a4"/></linearGradient></defs><path d="M0 15C0 6.500 6.500 0 15 0s15 6 15 12.500c0 5-4 7.500-7.500 7.500-3 0-4.500-1-4.300-2 1.800-2.300 1-6-3.200-6-6-2-11-2-15 3z" fill="url(#e1)"/><path d="M0 15c1-6 9-8 15-4-6 1-5.500 10 0 14 4 3 9 2 12.500-1.500C25 27.500 20.500 30 15 30 6.500 30 0 23.500 0 15z" fill="url(#e2)"/><path d="M11.500 14c-3 7 3 13 10 12 3-.3 5-1.500 6-2.800-4 2-12 1-13-5.700z" fill="#104b8c"/></svg>
  <div class="w-[30px] h-[59px] ml-[25px] flex flex-col items-center justify-end pb-[5px]">
    <svg class="w-[30px] h-[27px] shrink-0" viewBox="0 0 30 27"><path d="M0 1.500Q0 0 1.500 0H10l3 4H0z" fill="#dd9a12"/><path d="M0 5h10l3-2h15.500q1.500 0 1.500 1.500v20.800q0 1.500-1.500 1.500h-27Q0 26.800 0 25.300z" fill="#fdcb3c"/><path d="M4.500 27v-6q0-2 2-2h17q2 0 2 2v6z" fill="#1a7bd0"/><path d="M9 22h12v1.500H9z" fill="#0f5aa6"/></svg>
    <i class="w-[8px] h-[4px] mt-[7px] rounded-full bg-[#7b8491]"></i>
  </div>
  <div class="w-[48px] h-[48px] ml-[16px] mt-px rounded-[5px] bg-[#ebeff9] border border-[#e3e7f3] flex flex-col items-center justify-end">
    <svg class="w-[30px] h-[30px] shrink-0" viewBox="0 0 30 30"><path d="M15 15 2 7.500A15 15 0 0 1 28 7.500z" fill="#db4437"/><path d="M15 15 15 30A15 15 0 0 1 2 7.500L8.500 18.800z" fill="#2b9b4e"/><path d="M15 7.500h13A15 15 0 0 1 15 30L21.500 18.800z" fill="#fbc815"/><circle cx="15" cy="15" r="7.400" fill="#fff"/><circle cx="15" cy="15" r="5.700" fill="#3b7de8"/></svg>
    <i class="w-[20px] h-[4px] mt-[5px] rounded-full bg-[#0d74cf]"></i>
  </div>
  <div class="w-[22px] h-[59px] ml-[20px] flex flex-col items-center justify-end pb-[5px]">
    <svg class="w-[22px] h-[28px] shrink-0" viewBox="0 0 22 28"><g transform="translate(1 3)"><path d="M.5 7C2 3 6 .8 10 .8S18 3 19.500 7C17 5 13.800 4 10 4S3 5 .5 7zM.5 15.500c1.500 4 5.500 6.500 9.500 6.500s8-2.500 9.500-6.500c-2.500 2-5.700 3-9.500 3s-7-1-9.500-3z" fill="#ec7d3c"/></g><circle cx="18.500" cy="2" r="1.700" fill="#666"/><circle cx="2.500" cy="4" r="1.200" fill="#555"/><circle cx="4" cy="25.500" r="2" fill="#888"/></svg>
    <i class="w-[8px] h-[4px] mt-[6px] rounded-full bg-[#7b8491]"></i>
  </div>
  <div class="w-[26px] h-[59px] ml-[31px] flex flex-col items-center justify-end pb-[5px]">
    <svg class="w-[26px] h-[27px] shrink-0" viewBox="0 0 26 27"><path d="M0 0h26v27H0z" fill="#000"/><path d="M1.800 1.800h22.400v18.500L19.500 11 18 9.500l-2 1.500-.5 3L9 6.500 1.800 17z" fill="#e3e9f6"/><path d="M15.500 14l1.800 4" stroke="#e3e9f6" stroke-width="1.500"/></svg>
    <i class="w-[8px] h-[4px] mt-[7px] rounded-full bg-[#7b8491]"></i>
  </div>
  <div class="w-[28px] h-[59px] ml-[28px] flex flex-col items-center justify-end pb-[5px]">
    <svg class="w-[28px] h-[23px] shrink-0" viewBox="0 0 28 23"><path d="M.7.700h26.600v21.600H.7z" fill="#0a0a0a" stroke="#9a9da1" stroke-width="1.400"/><path d="M1 1h26v1.600H1z" fill="#c9ccd0"/><path d="M1.500 3h25v4c-10 0-20 3-25 7z" fill="#3c3c3c"/><path d="M3.500 5v3M5.500 5.500h1.500M5.500 8H7M8.500 5l1.500 3M11 8.500h7" stroke="#fff" fill="none"/></svg>
    <i class="w-[8px] h-[4px] mt-[9px] rounded-full bg-[#7b8491]"></i>
  </div>
  <div class="w-[28px] h-[59px] ml-[27px] flex flex-col items-center justify-end pb-[5px]">
    <svg class="w-[28px] h-[29px] shrink-0" viewBox="0 0 28 29"><path d="M14 0C22 0 28 5 28 12c0 8-6 9.500-9.500 9-2.500-.3-4-1.500-5-.5S12.500 24 11 25c-1 .8-2.500-1-5-2C2 21 0 17.500 0 13 0 6 6.500 0 14 0z" fill="#35a8e6"/><circle cx="14.500" cy="5.500" r="2.800" fill="#f6c12d"/><circle cx="7.500" cy="8.500" r="2.700" fill="#39a845"/><circle cx="4.800" cy="14.500" r="2.500" fill="#d3532d"/><circle cx="14" cy="16" r="2" fill="#e9f5fd"/><path d="M18.500 9h6.500v3l-1.500 3h-3.500l-1.500-3z" fill="#f0e2c8"/><path d="M20.300 15h2.900v13l-1.400 1-1.500-1z" fill="#a5713d"/></svg>
    <i class="w-[8px] h-[4px] mt-[5px] rounded-full bg-[#7b8491]"></i>
  </div>
  <div class="ml-auto mr-[23px] flex items-center text-[15.2px] leading-[20px] text-[#1c1f24]">
    <svg class="w-[14px] h-[9px] mb-[2px]" viewBox="0 0 14 9"><path d="M1 8l6-6 6 6" fill="none" stroke="#1c1f24" stroke-width="1.800"/></svg>
    <svg class="w-[20px] h-[17px] ml-[24px] mb-[2px]" viewBox="0 0 20 17"><path d="M5 14.500a4 4 0 0 1-.5-8 5.500 5.500 0 0 1 10-.5c3 0 4.800 2 4.800 4.500s-1.500 4-4 4z" fill="#c4c4c4" stroke="#222" stroke-width="1.500"/><path d="M2 1l16 15" stroke="#222" stroke-width="1.600"/></svg>
    <div class="w-[40px] ml-[18px] pb-[2px] text-center"><p>ENG</p><p>IN</p></div>
    <svg class="w-[81px] h-[18px] ml-[17px] mb-[2px]" viewBox="0 0 81 18" fill="none" stroke="#1c1f24" stroke-width="1.500"><path d="M.8 7a13 13 0 0 1 18.400 0M3.800 9.800a8.800 8.800 0 0 1 12.400 0M6.800 12.500a4.700 4.700 0 0 1 6.400 0"/><circle cx="10" cy="15" r="1.500" fill="#1c1f24" stroke="none"/><path d="M31 6.500h3l4-3.500v12l-4-3.500h-3zM41 6.500q2 2.500 0 5M43.800 4q4 5 0 10"/><path d="M46.800 2.500q5 6.500 0 13" stroke="#b5bcc6"/><rect x="61" y="4" width="16" height="10.500" rx="2.500"/><path d="M63 6h5v6.500h-5z" fill="#1c1f24" stroke="none"/><path d="M78.500 7.500h2v3.500h-2z" fill="#1c1f24" stroke="none"/></svg>
    <div class="w-[97px] pb-[4px] mr-px text-right whitespace-nowrap tracking-[-0.1px]"><p>02:00 PM</p><p>23-05-2023</p></div>
  </div>
</div>
</body>
</html>
